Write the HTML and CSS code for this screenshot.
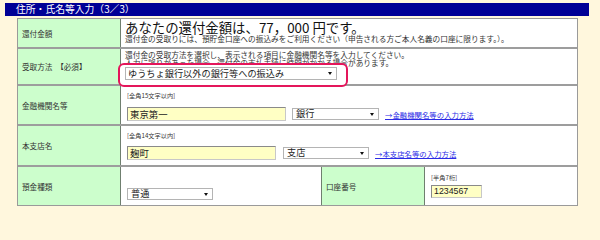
FILE: index.html
```html
<!DOCTYPE html>
<html lang="ja">
<head>
<meta charset="utf-8">
<title>住所・氏名等入力</title>
<link rel="stylesheet" href="styles.css">
</head>
<body>
<div class="page">
  <div class="title">住所・氏名等入力（3／3）</div>
  <div class="form">
    <div class="row r1">
      <div class="label">還付金額</div>
      <div class="value">
        <div class="big">あなたの還付金額は、77，000&nbsp;円です。</div>
        <div class="small">還付金の受取りには、預貯金口座への振込みをご利用ください（申告される方ご本人名義の口座に限ります。）。</div>
      </div>
    </div>
    <div class="row r2">
      <div class="label">受取方法　【必須】</div>
      <div class="value">
        <div class="small">還付金の受取方法を選択し、表示される項目に金融機関名等を入力してください。</div>
        <div class="small">入力に誤りがあった場合、還付金の支払手続に時間がかかる場合があります。</div>
        <div class="highlight">
          <div class="select method"><span>ゆうちょ銀行以外の銀行等への振込み</span><i class="arrow"></i></div>
        </div>
      </div>
    </div>
    <div class="row r3">
      <div class="label">金融機関名等</div>
      <div class="value">
        <div class="hint">[全角15文字以内]</div>
        <div class="line">
          <div class="input bank">東京第一</div>
          <div class="select kind"><span>銀行</span><i class="arrow"></i></div>
          <a class="link" href="#">→金融機関名等の入力方法</a>
        </div>
      </div>
    </div>
    <div class="row r4">
      <div class="label">本支店名</div>
      <div class="value">
        <div class="hint">[全角14文字以内]</div>
        <div class="line">
          <div class="input branch">麹町</div>
          <div class="select kind2"><span>支店</span><i class="arrow"></i></div>
          <a class="link" href="#">→本支店名等の入力方法</a>
        </div>
      </div>
    </div>
    <div class="row r5">
      <div class="label">預金種類</div>
      <div class="value v-type">
        <div class="select type"><span>普通</span><i class="arrow"></i></div>
      </div>
      <div class="label">口座番号</div>
      <div class="value v-num">
        <div class="hint">[半角7桁]</div>
        <div class="input num">1234567</div>
      </div>
    </div>
  </div>
</div>
</body>
</html>
```
FILE: styles.css
```css
* { box-sizing: border-box; }
html, body { margin: 0; padding: 0; }
body {
  background: #fff7dd;
  font-family: "Noto Sans CJK JP", "Noto Sans", sans-serif;
  color: #222;
  width: 600px;
  height: 210px;
  overflow: hidden;
}
.page { padding: 3px 0 0 5px; }
.title {
  width: 584px;
  height: 13px;
  background: #000096;
  color: #fff;
  font-size: 9.8px;
  line-height: 13px;
  padding-left: 11px;
}
.form {
  margin: 2px 0 0 12px;
  width: 561px;
  border: 1px solid #9a9a9a;
  background: #fff;
}
.row {
  display: grid;
  grid-template-columns: 103px 1fr;
  border-top: 2px solid #9d9d9d;
}
.row.r1 { border-top: 0; height: 28px; }
.row.r2 { height: 37px; }
.row.r3 { height: 40px; }
.row.r4 { height: 41px; }
.row.r5 { height: 40px; grid-template-columns: 103px 201px 103px 1fr; }
.label {
  background: #ccfecc;
  border-right: 1px solid #6f7f6f;
  display: flex;
  align-items: center;
  padding-left: 4px;
  font-size: 7.6px;
  color: #333;
}
.value { padding-left: 4px; position: relative; }
.v-type { border-right: 1px solid #6f7f6f; }
.big { font-size: 13.4px; line-height: 14px; color: #111; padding-top: 1px; }
.small { font-size: 7.7px; line-height: 8px; color: #333; white-space: nowrap; }
.r1 .small { line-height: 9px; }
.r2 .value { padding-top: 2px; }
.highlight {
  position: relative;
  width: 212px;
}
.highlight::before {
  content: "";
  position: absolute;
  left: -7px; right: -11px; top: -4px; bottom: -7px;
  border: 2.5px solid #e4165b;
  border-radius: 6px;
  background: #fff;
  z-index: 0;
}
.select {
  position: relative;
  z-index: 1;
  height: 13px;
  background: #fff;
  border: 1px solid #b4b4b4;
  display: flex;
  align-items: center;
  justify-content: space-between;
  padding: 0 3px 0 3px;
  font-size: 9.2px;
  color: #222;
  line-height: 1;
}
.arrow {
  display: block;
  width: 0; height: 0;
  border-left: 2px solid transparent;
  border-right: 2px solid transparent;
  border-top: 3px solid #111;
  margin-right: 1px;
}
.method { width: 212px; padding-left: 2px; }
.r3 .value, .r4 .value { padding-left: 6px; }
.hint { font-size: 6.2px; line-height: 8px; color: #333; }
.r3 .value { padding-top: 6px; }
.r3 .hint { margin-bottom: 7px; }
.r4 .value { padding-top: 6px; }
.r4 .hint { margin-bottom: 6px; }
.line { display: flex; align-items: center; }
.input {
  height: 14px;
  background: #ffffc4;
  border: 1px solid #c8c8c8;
  border-top-color: #8a8a8a;
  border-left-color: #8a8a8a;
  font-size: 9.4px;
  line-height: 12px;
  padding-left: 2px;
  color: #222;
}
.bank { width: 159px; }
.branch { width: 149px; }
.kind { width: 87px; margin-left: 6px; height: 12px; }
.kind2 { width: 86px; margin-left: 7px; height: 12px; }
.link {
  font-size: 7.4px;
  color: #2a2ae6;
  text-decoration: underline;
  margin-left: 6px;
}
.v-type { padding: 21px 0 0 6px; }
.type { width: 86px; height: 12px; }
.v-num { padding: 7px 0 0 6px; }
.v-num .hint { margin-bottom: 3px; }
.num {
  width: 51px;
  height: 13px;
  font-family: "Liberation Sans", Arial, sans-serif;
  font-size: 8.8px;
  line-height: 11px;
}
```
